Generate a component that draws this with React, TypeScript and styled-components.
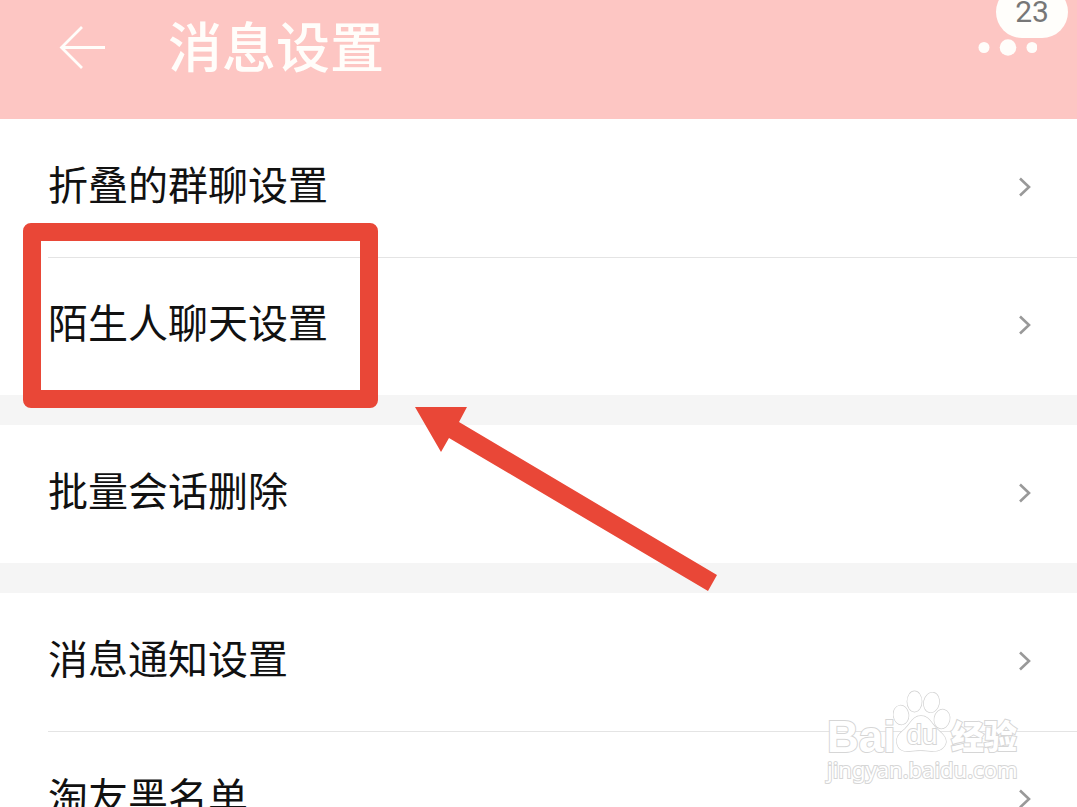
import React from "react";
import styled, { createGlobalStyle } from "styled-components";

const GlobalStyle = createGlobalStyle`
  *, *::before, *::after { box-sizing: border-box; }
  body {
    margin: 0;
    background: #fff;
    font-family: Roboto, "Noto Sans CJK SC", sans-serif;
  }
  button {
    margin: 0;
    padding: 0;
    border: 0;
    background: none;
    color: inherit;
    font: inherit;
    cursor: pointer;
  }
  svg { display: block; }
`;

const Screen = styled.div`
  position: relative;
  display: flex;
  flex-direction: column;
  height: 100vh;
  overflow: hidden;
  background: #f5f5f5;
`;

const Header = styled.header`
  position: relative;
  display: flex;
  flex: none;
  align-items: center;
  padding: 0 40px 24px 56px;
  height: 119px;
  background: #fdc6c3;
  color: #fffdfa;
`;

const BackButton = styled.button`
  flex: none;
  width: 52px;
`;

const Title = styled.h1`
  flex: 1;
  margin: 0 0 0 60px;
  padding-top: 4px;
  font-size: 54px;
  font-weight: 500;
  line-height: 80px;
`;

const MoreButton = styled.button`
  flex: none;
`;

const Badge = styled.span`
  position: absolute;
  top: -14px;
  right: 9px;
  width: 72px;
  border-radius: 26px;
  background: #fffefb;
  color: #777;
  font-family: Roboto, sans-serif;
  font-size: 30px;
  line-height: 52px;
  text-align: center;
`;

const Main = styled.main`
  display: flex;
  flex-direction: column;
  gap: 30px;
`;

const Group = styled.ul`
  margin: 0;
  padding: 0;
  list-style: none;
  background: #fff;
`;

const Item = styled.li`
  position: relative;
  padding-left: 48px;
`;

const ItemButton = styled.button<{ $divided: boolean }>`
  display: flex;
  align-items: center;
  justify-content: space-between;
  width: 100%;
  height: 138px;
  padding: 0 43px 4px 0;
  border-top: 1px solid ${(p) => (p.$divided ? "#e4e4e4" : "transparent")};
  color: #111;
  font-size: 40px;
  line-height: 60px;
  text-align: left;
`;

const Highlight = styled.span`
  position: absolute;
  z-index: 1;
  top: -34px;
  bottom: -13px;
  left: 23px;
  width: 355px;
  border: 18px solid #e94737;
  border-radius: 8px;
  pointer-events: none;
`;

const Pointer = styled.svg`
  position: absolute;
  z-index: 1;
  top: 150px;
  left: 415px;
  pointer-events: none;
`;

const Watermark = styled.div`
  position: absolute;
  right: 56px;
  bottom: 22px;
  z-index: 2;
  width: 194px;
  color: #fff;
  -webkit-text-stroke: 2px #d6d6d6;
  paint-order: stroke fill;
  pointer-events: none;
`;

const Brand = styled.div`
  display: flex;
  align-items: flex-end;
  height: 64px;
`;

const Latin = styled.span`
  width: 66px;
  font-family: "Liberation Sans", sans-serif;
  font-size: 44px;
  font-weight: 700;
  line-height: 32px;
`;

const Paw = styled.span`
  position: relative;
  flex: none;
  width: 58px;
`;

const PawText = styled.span`
  position: absolute;
  right: 0;
  bottom: 4px;
  left: 0;
  font-family: "Liberation Sans", sans-serif;
  font-size: 28px;
  line-height: 28px;
  text-align: center;
`;

const Han = styled.span`
  font-family: "Noto Sans CJK SC", sans-serif;
  font-size: 33px;
  font-weight: 900;
  line-height: 36px;
`;

const Domain = styled.div`
  font-family: "Noto Sans", sans-serif;
  font-size: 22px;
  line-height: 32px;
`;

const BackIcon = () => (
  <svg width="52" height="48" viewBox="0 0 52 48" fill="none" stroke="currentColor" strokeWidth="2.8" aria-hidden="true">
    <path d="M26 3 5.5 23.5l20.500 20.500M5.500 23.500h43.500" />
  </svg>
);

const MoreIcon = () => (
  <svg width="64" height="20" viewBox="0 0 64 20" fill="currentColor" aria-hidden="true">
    <circle cx="11" cy="9.500" r="5.500" />
    <circle cx="35" cy="9.500" r="8.300" />
    <circle cx="59" cy="9.500" r="5.500" />
  </svg>
);

const ChevronIcon = () => (
  <svg width="18" height="24" viewBox="0 0 18 24" fill="none" stroke="#999" strokeWidth="2.600" aria-hidden="true">
    <path d="M4 3.500 13 12l-9 8.500" />
  </svg>
);

const PawIcon = () => (
  <svg width="58" height="64" viewBox="0 0 58 64" fill="#fff" stroke="#d2d2d2" strokeWidth="1.400" aria-hidden="true">
    <ellipse cx="8" cy="26" rx="7.500" ry="9.500" transform="rotate(-8 8 26)" />
    <ellipse cx="21.500" cy="12.500" rx="7.200" ry="10.200" />
    <ellipse cx="38.500" cy="13.500" rx="7.600" ry="10" transform="rotate(12 38.500 13.500)" />
    <ellipse cx="49" cy="30" rx="7.600" ry="9.500" transform="rotate(12 49 30)" />
    <path d="M28 27c-8 0-10 7-16 13C6 45 3 48 4 54c1 7 7 9 13 8 8-1 13-1 21 0 8 1 14-3 15-9 0-6-5-9-9-13-6-6-8-13-16-13Z" />
  </svg>
);

const groups: { label: string; highlighted?: boolean }[][] = [
  [{ label: "折叠的群聊设置" }, { label: "陌生人聊天设置", highlighted: true }],
  [{ label: "批量会话删除" }],
  [{ label: "消息通知设置" }, { label: "淘友黑名单" }],
];

export default function App() {
  return (
    <>
      <GlobalStyle />
      <Screen lang="zh-CN">
        <Header>
          <BackButton aria-label="返回">
            <BackIcon />
          </BackButton>
          <Title>消息设置</Title>
          <MoreButton aria-label="更多">
            <MoreIcon />
          </MoreButton>
          <Badge>23</Badge>
        </Header>
        <Main>
          {groups.map((items) => (
            <Group key={items[0].label}>
              {items.map((item, index) => (
                <Item key={item.label}>
                  <ItemButton $divided={index > 0}>
                    {item.label}
                    <ChevronIcon />
                  </ItemButton>
                  {item.highlighted && (
                    <>
                      <Highlight />
                      <Pointer width="303" height="184" viewBox="0 0 303 184" fill="#e94737" aria-hidden="true">
                        <path d="M0 0H52L44 15 302 168 293 184 34 31 26 45Z" />
                      </Pointer>
                    </>
                  )}
                </Item>
              ))}
            </Group>
          ))}
        </Main>
        <Watermark>
          <Brand>
            <Latin>Bai</Latin>
            <Paw>
              <PawIcon />
              <PawText>du</PawText>
            </Paw>
            <Han>经验</Han>
          </Brand>
          <Domain>jingyan.baidu.com</Domain>
        </Watermark>
      </Screen>
    </>
  );
}
